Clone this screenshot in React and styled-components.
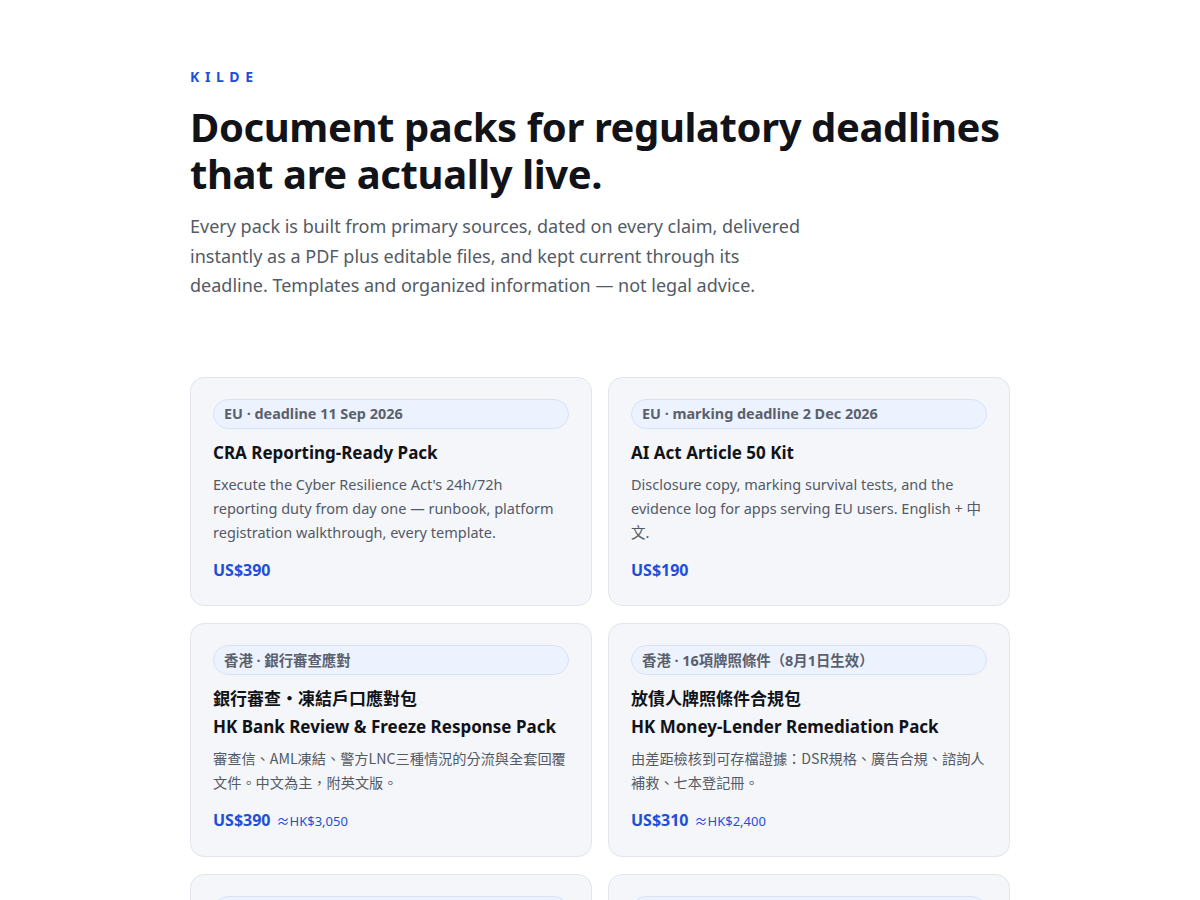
import React from 'react'
import styled, { createGlobalStyle } from 'styled-components'

const GlobalStyle = createGlobalStyle`
  * { box-sizing: border-box; }
  body {
    margin: 0;
    background: #ffffff;
    font-family: "Noto Sans", "Noto Sans CJK TC", sans-serif;
    color: #111318;
  }
`

const packs = [
  {
    badge: 'EU · deadline 11 Sep 2026',
    title: ['CRA Reporting-Ready Pack'],
    text: "Execute the Cyber Resilience Act's 24h/72h reporting duty from day one — runbook, platform registration walkthrough, every template.",
    price: 'US$390',
  },
  {
    badge: 'EU · marking deadline 2 Dec 2026',
    title: ['AI Act Article 50 Kit'],
    text: 'Disclosure copy, marking survival tests, and the evidence log for apps serving EU users. English + 中文.',
    price: 'US$190',
  },
  {
    badge: '香港 · 銀行審查應對',
    title: ['銀行審查・凍結戶口應對包', 'HK Bank Review & Freeze Response Pack'],
    text: '審查信、AML凍結、警方LNC三種情況的分流與全套回覆文件。中文為主，附英文版。',
    price: 'US$390',
    local: '≈HK$3,050',
    cjk: true,
  },
  {
    badge: '香港 · 16項牌照條件（8月1日生效）',
    title: ['放債人牌照條件合規包', 'HK Money-Lender Remediation Pack'],
    text: '由差距檢核到可存檔證據：DSR規格、廣告合規、諮詢人補救、七本登記冊。',
    price: 'US$310',
    local: '≈HK$2,400',
    cjk: true,
  },
  {
    badge: 'UK · deadline 1 Apr 2027',
    title: ['Failure-to-Prevent Fraud Kit'],
    text: 'Risk assessment, reasonable procedures and training records for the new fraud offence.',
    price: 'US$290',
  },
  {
    badge: 'US · deadline 30 Jun 2026',
    title: ['State Privacy Law Readiness Pack'],
    text: 'Notices, opt-out flows and data inventories for the newest state privacy laws.',
    price: 'US$240',
  },
]

export default function App() {
  return (
    <>
      <GlobalStyle />
      <Page>
        <Hero>
          <Brand>KILDE</Brand>
          <Headline>Document packs for regulatory deadlines that are actually live.</Headline>
          <Lead>
            Every pack is built from primary sources, dated on every claim, delivered instantly as a PDF plus
            editable files, and kept current through its deadline. Templates and organized information — not
            legal advice.
          </Lead>
        </Hero>
        <Grid>
          {packs.map((p) => (
            <Card key={p.badge}>
              <Badge>{p.badge}</Badge>
              <Title>
                {p.title.map((t) => (
                  <TitleLine key={t}>{t}</TitleLine>
                ))}
              </Title>
              <Text $cjk={p.cjk} lang={p.cjk ? 'zh-Hant' : 'en'}>{p.text}</Text>
              <Price>
                {p.price}
                {p.local && <Local>{p.local}</Local>}
              </Price>
            </Card>
          ))}
        </Grid>
      </Page>
    </>
  )
}

const Page = styled.main`
  max-width: 820px;
  margin: 0 auto;
  padding: 66px 0 80px;
`

const Hero = styled.header`
  display: flex;
  flex-direction: column;
  margin-bottom: 76px;
`

const Brand = styled.div`
  font-size: 14px;
  font-weight: 700;
  letter-spacing: 0.4em;
  color: #1d4fd8;
  line-height: 22px;
`

const Headline = styled.h1`
  margin: 15px 0 0;
  font-size: 40px;
  font-weight: 700;
  line-height: 47px;
  letter-spacing: -0.4px;
  color: #111318;
`

const Lead = styled.p`
  margin: 15px 0 0;
  max-width: 620px;
  font-size: 18px;
  line-height: 29.5px;
  color: #525a66;
`

const Grid = styled.section`
  display: grid;
  grid-template-columns: 1fr 1fr;
  gap: 17px 16px;
`

const Card = styled.article`
  display: flex;
  flex-direction: column;
  padding: 21px 22px 23px;
  background: #f5f6fa;
  border: 1px solid #e1e5ec;
  border-radius: 14px;
`

const Badge = styled.div`
  height: 30px;
  display: flex;
  align-items: center;
  padding: 0 10px;
  background: #edf3fe;
  border: 1px solid #d7e2f6;
  border-radius: 999px;
  font-size: 14.4px;
  font-weight: 700;
  color: #5a616d;
`

const Title = styled.h3`
  margin: 10px 0 0;
  display: flex;
  flex-direction: column;
  font-size: 17px;
  font-weight: 700;
  color: #111318;
`

const TitleLine = styled.span`
  line-height: 28px;
`

const Text = styled.p`
  margin: 5px 0 0;
  font-family: ${(p) => (p.$cjk ? '"Noto Sans CJK TC", "Noto Sans", sans-serif' : '"Noto Sans", "Noto Sans CJK TC", sans-serif')};
  font-size: ${(p) => (p.$cjk ? '14.2px' : '14.5px')};
  line-height: 24px;
  color: #525a66;
`

const Price = styled.div`
  margin-top: 14px;
  display: flex;
  align-items: baseline;
  gap: 6px;
  font-size: 16px;
  font-weight: 700;
  line-height: 24px;
  color: #1d4fd8;
`

const Local = styled.span`
  font-size: 13px;
  font-weight: 400;
  color: #1d4fd8;
`
